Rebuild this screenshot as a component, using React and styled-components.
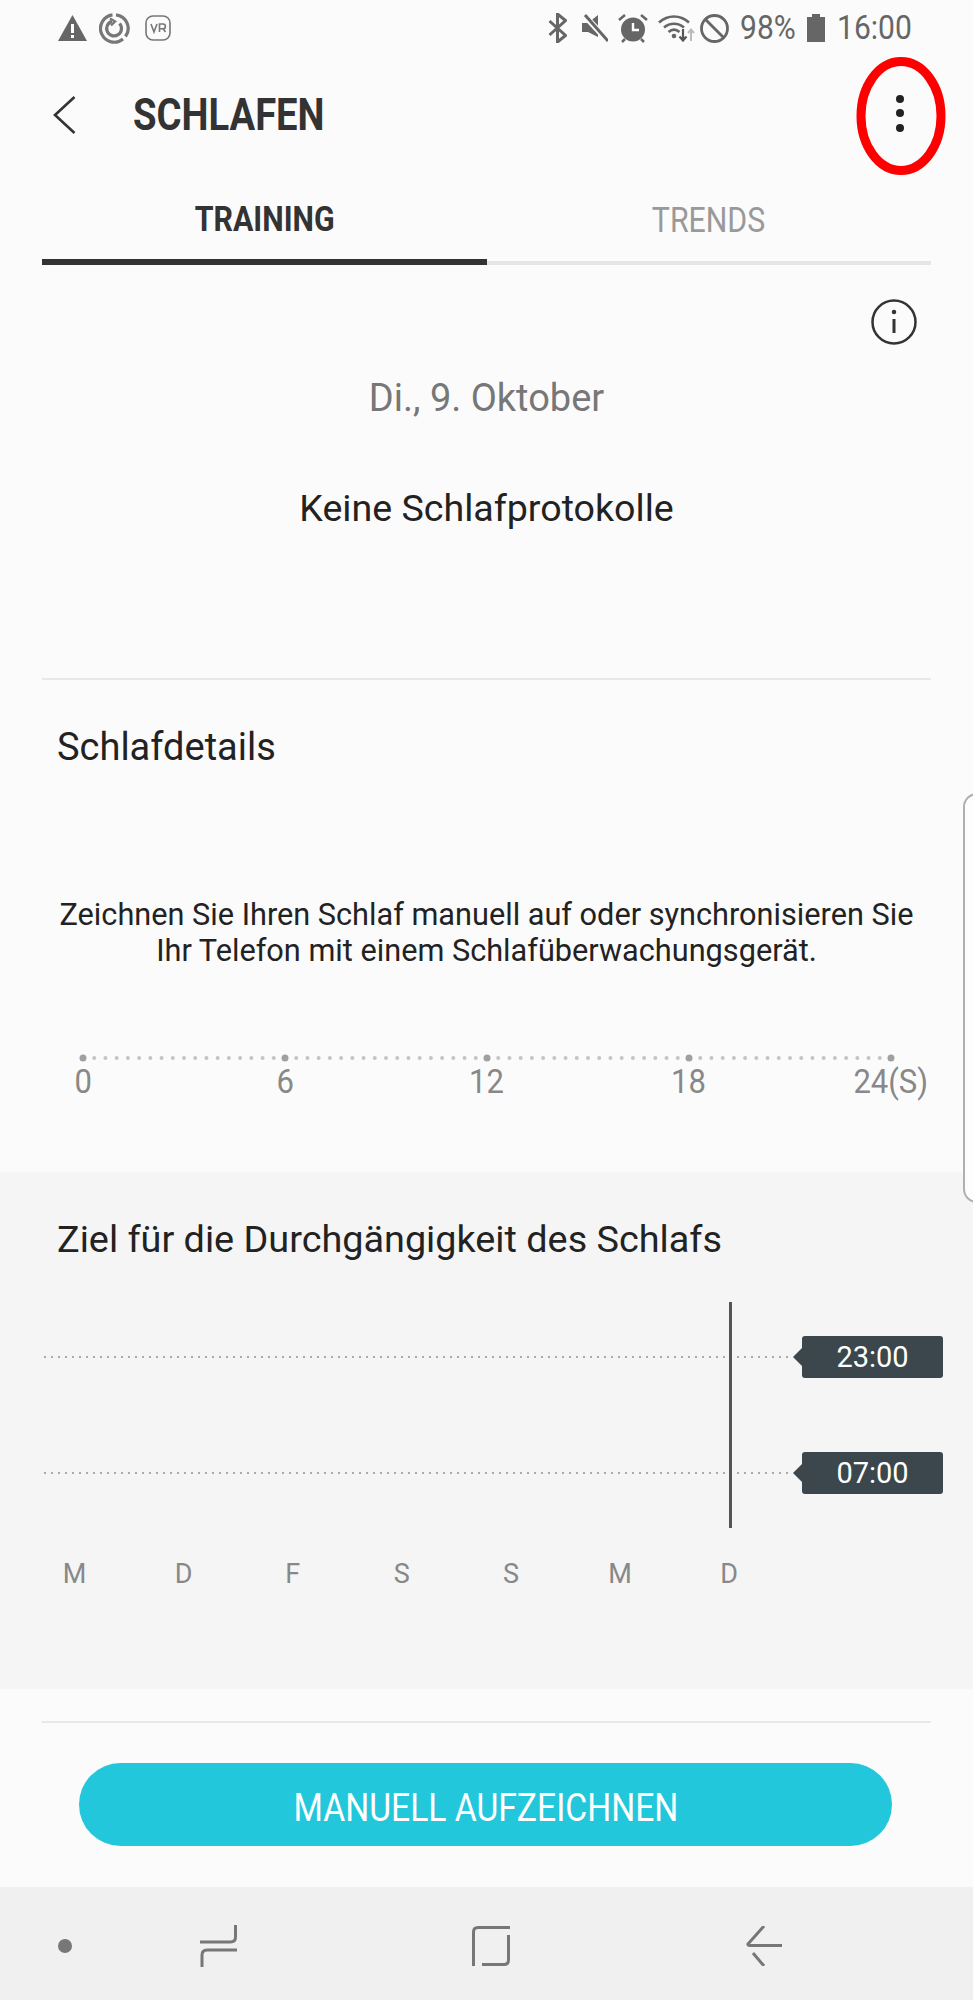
import React from "react";
import styled, { createGlobalStyle } from "styled-components";

const GlobalStyle = createGlobalStyle`
  html, body {
    margin: 0;
    padding: 0;
    background: #fbfbfb;
  }
  * {
    box-sizing: border-box;
  }
`;

const Screen = styled.div`
  position: relative;
  width: 973px;
  height: 2000px;
  overflow: hidden;
  display: flex;
  flex-direction: column;
  background: #fbfbfb;
  font-family: Roboto, "Liberation Sans", sans-serif;
`;

const Squeezed = styled.span`
  display: inline-block;
  white-space: nowrap;
  transform: scaleX(${({ $x }) => $x || 0.9});
  transform-origin: ${({ $origin }) => $origin || "center"};
`;

const StatusBar = styled.div`
  height: 56px;
  display: flex;
  align-items: center;
  justify-content: space-between;
  padding: 0 63px 0 58px;
  color: #666;
`;

const StatusGroup = styled.div`
  display: flex;
  align-items: center;
`;

const StatusSlot = styled.div`
  display: flex;
  margin-left: ${({ $ml }) => $ml || 0}px;
`;

const StatusText = styled.div`
  font-size: 33px;
  line-height: 40px;
  color: #666;
  width: ${({ $w }) => $w}px;
  margin-left: ${({ $ml }) => $ml}px;
`;

const Header = styled.div`
  height: 118px;
  display: flex;
  align-items: center;
  padding-left: 53px;
`;

const BackButton = styled.div`
  width: 80px;
  display: flex;
  align-items: center;
`;

const Title = styled.h1`
  margin: 0;
  font-size: 44px;
  line-height: 50px;
  font-weight: 700;
  color: #333;
`;

const Tabs = styled.div`
  height: 91px;
  margin: 0 42px;
  display: grid;
  grid-template-columns: 445px 444px;
`;

const Tab = styled.div`
  display: flex;
  align-items: center;
  justify-content: center;
  padding-top: 6px;
  font-size: 35px;
  font-weight: ${({ $active }) => ($active ? 700 : 400)};
  color: ${({ $active }) => ($active ? "#333" : "#999")};
  border-bottom: ${({ $active }) => ($active ? "6px solid #333" : "4px solid #e6e6e6")};
`;

const Summary = styled.section`
  height: 415px;
  margin: 0 42px;
  padding-top: 34px;
  border-bottom: 2px solid #e8e8e8;
  display: flex;
  flex-direction: column;
  align-items: center;
`;

const InfoRow = styled.div`
  align-self: stretch;
  display: flex;
  justify-content: flex-end;
  padding-right: 14px;
`;

const DateLabel = styled.div`
  margin-top: 31px;
  font-size: 38px;
  line-height: 44px;
  color: #777;
`;

const NoData = styled.div`
  margin-top: 66px;
  font-size: 37.600px;
  line-height: 44px;
  color: #222;
`;

const Details = styled.section`
  height: 492px;
  padding: 45px 42px 0 57px;
`;

const SectionTitle = styled.h2`
  margin: 0;
  font-size: 38px;
  line-height: 44px;
  font-weight: 400;
  color: #222;
`;

const Hint = styled.p`
  margin: 128px 15px 0 0;
  font-size: 30.7px;
  line-height: 36px;
  color: #222;
  text-align: center;
`;

const Timeline = styled.div`
  margin: 85px 0 0 26px;
  width: 808px;
  display: block;
`;

const TimelineLabels = styled.div`
  display: flex;
  justify-content: space-between;
  margin-top: 2px;
  font-size: 33px;
  line-height: 36px;
  color: #888;
`;

const TimelineLabel = styled.div`
  width: 0;
  display: flex;
  justify-content: center;
`;

const GoalSection = styled.section`
  height: 517px;
  background: #f5f5f5;
  padding-top: 45px;
`;

const GoalTitle = styled(SectionTitle)`
  padding-left: 57px;
  font-size: 37.800px;
`;

const GoalChart = styled.div`
  position: relative;
  margin: 41px 30px 0 44px;
  height: 226px;
  padding-top: 34px;
  display: flex;
  flex-direction: column;
  gap: 74px;
`;

const GoalRow = styled.div`
  height: 42px;
  display: flex;
  align-items: center;
`;

const DottedLine = styled.div`
  flex: 1;
  height: 2px;
  background-image: repeating-linear-gradient(to right, #aaa 0 2px, transparent 2px 7px);
`;

const TimeTag = styled.div`
  position: relative;
  margin-left: 9px;
  width: 141px;
  height: 42px;
  display: flex;
  align-items: center;
  justify-content: center;
  background: #3b474d;
  border-radius: 3px;
  color: #fff;
  font-size: 29px;

  &::before {
    content: "";
    position: absolute;
    left: -9px;
    top: 12px;
    border-style: solid;
    border-width: 9px 9px 9px 0;
    border-color: transparent #3b474d transparent transparent;
  }
`;

const TodayLine = styled.div`
  position: absolute;
  left: 685px;
  top: 0;
  bottom: 0;
  width: 3px;
  background: #555;
`;

const Days = styled.div`
  margin: 29px 0 0 20px;
  display: grid;
  grid-template-columns: repeat(7, 109.100px);
  font-size: 27px;
  line-height: 34px;
  color: #888;
  text-align: center;
`;

const ActionArea = styled.div`
  height: 198px;
  margin: 0 42px;
  padding-top: 32px;
`;

const ActionDivider = styled.div`
  height: 2px;
  background: #e8e8e8;
`;

const RecordButton = styled.button`
  display: flex;
  align-items: center;
  justify-content: center;
  width: 813px;
  height: 83px;
  margin: 40px 0 0 37px;
  padding: 7px 0 0;
  border: 0;
  border-radius: 42px;
  background: #22c7dc;
  color: #fff;
  font-family: inherit;
  font-size: 39px;
`;

const NavBar = styled.nav`
  flex: 1;
  background: #f0f0f0;
  display: flex;
  align-items: center;
  padding: 4px 0 0 58px;
`;

const NavDot = styled.div`
  width: 14px;
  height: 14px;
  border-radius: 50%;
  background: #777;
  margin-right: 128px;
`;

const NavIcon = styled.div`
  display: flex;
  margin-right: ${({ $gap }) => $gap}px;
`;

const EdgeHandle = styled.div`
  position: absolute;
  left: 963px;
  top: 793px;
  width: 30px;
  height: 410px;
  border: 2px solid #b0b0b0;
  border-radius: 14px;
  background: #fdfdfd;
`;

const Annotation = styled.svg`
  position: absolute;
  left: 852px;
  top: 53px;
`;

const WarningIcon = () => (
  <svg width="29" height="26" viewBox="0 0 29 26">
    <path d="M14.500 0L29 26H0z" fill="#666" />
    <rect x="13" y="9" width="3" height="9" fill="#fff" />
    <rect x="13" y="20" width="3" height="3" fill="#fff" />
  </svg>
);

const SyncIcon = () => (
  <svg width="31" height="31" viewBox="0 0 31 31" fill="none" stroke="#777">
    <path d="M17 1.800A13.700 13.700 0 0 1 26.500 23.500" strokeWidth="3.200" />
    <path d="M24 26A13.700 13.700 0 1 1 13.500 1.900" strokeWidth="3.200" />
    <path d="M20.500 10.500A7.400 7.400 0 1 1 13 8.400" strokeWidth="3.200" />
    <path d="M11 5.500l5 3-4 4" strokeWidth="2.400" />
  </svg>
);

const VrIcon = () => (
  <svg width="26" height="26" viewBox="0 0 26 26" fill="none" stroke="#777">
    <rect x="1" y="1" width="24" height="24" rx="7" strokeWidth="1.600" />
    <path d="M6 9l3 8 3-8M14.500 17V9h3.500a2.400 2.400 0 0 1 0 4.800h-3.500m3.500 0l2.500 3.200" strokeWidth="1.600" />
  </svg>
);

const BluetoothIcon = () => (
  <svg width="19" height="30" viewBox="0 0 19 30" fill="none" stroke="#666" strokeWidth="3">
    <path d="M1.500 8l16 14.500L9.500 29V1l8 6.500L1.500 22" />
  </svg>
);

const MuteIcon = () => (
  <svg width="26" height="28" viewBox="0 0 26 28">
    <path d="M0 9h6l10-8v22L6 18H0z" fill="#666" />
    <path d="M2 1l24 26" stroke="#fbfbfb" strokeWidth="6" />
    <path d="M3 1l23 26" stroke="#666" strokeWidth="3" />
  </svg>
);

const AlarmIcon = () => (
  <svg width="30" height="29" viewBox="0 0 30 29">
    <circle cx="15" cy="15.500" r="12" fill="#666" />
    <path d="M15 9v7h6" stroke="#fff" strokeWidth="2.400" fill="none" />
    <path d="M1 6l6-5M29 6l-6-5M4 28l3-3M26 28l-3-3" stroke="#666" strokeWidth="2.500" />
  </svg>
);

const WifiIcon = () => (
  <svg width="37" height="28" viewBox="0 0 37 28" fill="none">
    <path d="M1 8.500C10 .5 22 .5 31 8.500M6 13.500c6-5 14-5 20 0M10.500 18c3.500-3 7.500-3 11 0" stroke="#666" strokeWidth="2.600" />
    <circle cx="16" cy="22" r="2.300" fill="#666" />
    <path d="M25 15v11M21.500 22.500l3.500 4 3.500-4" stroke="#555" strokeWidth="2.200" />
    <path d="M33 27V16M30 19l3-3.500 3 3.500" stroke="#bbb" strokeWidth="2" />
  </svg>
);

const BlockedIcon = () => (
  <svg width="29" height="29" viewBox="0 0 29 29" fill="none" stroke="#666" strokeWidth="2.800">
    <circle cx="14.500" cy="14.500" r="13" />
    <path d="M5.500 5.500l18 18" />
  </svg>
);

const BatteryIcon = () => (
  <svg width="18" height="28" viewBox="0 0 18 28">
    <path d="M5 0h8v3h5v25H0V3h5z" fill="#666" />
  </svg>
);

const InfoIcon = () => (
  <svg width="46" height="46" viewBox="0 0 46 46" fill="none" stroke="#333" strokeWidth="2.500">
    <circle cx="23" cy="23" r="21.500" />
    <path d="M23 20v14" strokeWidth="3" />
    <circle cx="23" cy="13" r="1.500" fill="#333" strokeWidth="1.500" />
  </svg>
);

const TimelineDots = () => (
  <svg width="808" height="8" viewBox="0 0 808 8" style={{ display: "block", overflow: "visible" }}>
    {Array.from({ length: 73 }, (_, i) => (
      <circle
        key={i}
        cx={(i * 808) / 72}
        cy="4"
        r={i % 18 === 0 ? 3.500 : 2}
        fill={i % 18 === 0 ? "#a0a0a0" : "#c4c4c4"}
      />
    ))}
  </svg>
);

const days = ["M", "D", "F", "S", "S", "M", "D"];
const scale = ["0", "6", "12", "18", "24(S)"];

export default function App() {
  return (
    <Screen>
      <GlobalStyle />
      <StatusBar>
        <StatusGroup>
          <WarningIcon />
          <StatusSlot $ml={12}><SyncIcon /></StatusSlot>
          <StatusSlot $ml={15}><VrIcon /></StatusSlot>
        </StatusGroup>
        <StatusGroup>
          <BluetoothIcon />
          <StatusSlot $ml={15}><MuteIcon /></StatusSlot>
          <StatusSlot $ml={10}><AlarmIcon /></StatusSlot>
          <StatusSlot $ml={10}><WifiIcon /></StatusSlot>
          <StatusSlot $ml={5}><BlockedIcon /></StatusSlot>
          <StatusText $w={55} $ml={11}>
            <Squeezed $x={0.91} $origin="left">98%</Squeezed>
          </StatusText>
          <StatusSlot $ml={12}><BatteryIcon /></StatusSlot>
          <StatusText $w={73} $ml={12}>
            <Squeezed $x={0.91} $origin="left">16:00</Squeezed>
          </StatusText>
        </StatusGroup>
      </StatusBar>

      <Header>
        <BackButton>
          <svg width="23" height="38" viewBox="0 0 23 38" fill="none" stroke="#333" strokeWidth="2.600">
            <path d="M21.500 1L2 19l19.500 18" />
          </svg>
        </BackButton>
        <Title>
          <Squeezed $x={0.868} $origin="left">SCHLAFEN</Squeezed>
        </Title>
      </Header>

      <Tabs>
        <Tab $active>
          <Squeezed $x={0.867}>TRAINING</Squeezed>
        </Tab>
        <Tab>
          <Squeezed $x={0.865}>TRENDS</Squeezed>
        </Tab>
      </Tabs>

      <Summary>
        <InfoRow>
          <InfoIcon />
        </InfoRow>
        <DateLabel>Di., 9. Oktober</DateLabel>
        <NoData>Keine Schlafprotokolle</NoData>
      </Summary>

      <Details>
        <SectionTitle>Schlafdetails</SectionTitle>
        <Hint>
          Zeichnen Sie Ihren Schlaf manuell auf oder synchronisieren Sie
          <br />
          Ihr Telefon mit einem Schlafüberwachungsgerät.
        </Hint>
        <Timeline>
          <TimelineDots />
          <TimelineLabels>
            {scale.map((label) => (
              <TimelineLabel key={label}>
                <Squeezed $x={0.94}>{label}</Squeezed>
              </TimelineLabel>
            ))}
          </TimelineLabels>
        </Timeline>
      </Details>

      <GoalSection>
        <GoalTitle>Ziel für die Durchgängigkeit des Schlafs</GoalTitle>
        <GoalChart>
          <TodayLine />
          <GoalRow>
            <DottedLine />
            <TimeTag>23:00</TimeTag>
          </GoalRow>
          <GoalRow>
            <DottedLine />
            <TimeTag>07:00</TimeTag>
          </GoalRow>
        </GoalChart>
        <Days>
          {days.map((day, i) => (
            <div key={i}>{day}</div>
          ))}
        </Days>
      </GoalSection>

      <ActionArea>
        <ActionDivider />
        <RecordButton>
          <Squeezed $x={0.863}>MANUELL AUFZEICHNEN</Squeezed>
        </RecordButton>
      </ActionArea>

      <NavBar>
        <NavDot />
        <NavIcon $gap={235}>
          <svg width="37" height="42" viewBox="0 0 37 42" fill="none" stroke="#777" strokeWidth="3">
            <path d="M35.500 0v12q0 5-5 5H0M37 25H7q-5 0-5 5v12" />
          </svg>
        </NavIcon>
        <NavIcon $gap={236}>
          <svg width="38" height="40" viewBox="0 0 38 40" fill="none" stroke="#777" strokeWidth="3">
            <path d="M38 1.500H6q-4.500 0-4.500 4.500V40M36.500 9v25q0 4.500-4.500 4.500H10" />
          </svg>
        </NavIcon>
        <NavIcon $gap={0}>
          <svg width="36" height="40" viewBox="0 0 36 40" fill="none" stroke="#777" strokeWidth="3">
            <path d="M18 0L2 18q-.5 1.500 2 1.500h32M7 27l11 13" />
          </svg>
        </NavIcon>
      </NavBar>

      <EdgeHandle />

      <Annotation width="98" height="126" viewBox="0 0 98 126">
        <ellipse cx="49" cy="63" rx="40" ry="54.500" fill="none" stroke="#ff0000" strokeWidth="9" />
        <circle cx="48" cy="46" r="4" fill="#222" />
        <circle cx="48" cy="60" r="4" fill="#222" />
        <circle cx="48" cy="75" r="4" fill="#222" />
      </Annotation>
    </Screen>
  );
}
